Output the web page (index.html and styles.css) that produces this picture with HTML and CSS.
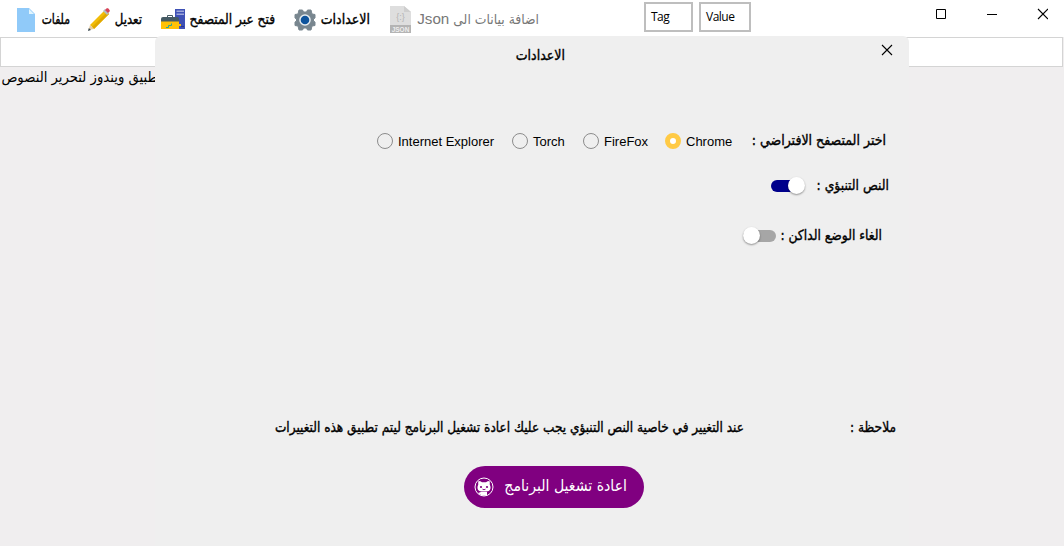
FILE: index.html
```html
<!DOCTYPE html>
<html lang="ar">
<head>
<meta charset="utf-8">
<title>الاعدادات</title>
<link rel="stylesheet" href="styles.css">
</head>
<body>
<header class="toolbar">
  <div class="tool tool-files">
    <svg width="18" height="24" viewBox="0 0 18 24"><path fill="#90caf9" d="M0 0h12l6 6v18H0z"/><path fill="#e1f5fe" d="M12 1v5h5z"/></svg>
    <span class="ar w-files" dir="rtl">ملفات</span>
  </div>
  <div class="tool tool-edit">
    <svg width="23" height="24" viewBox="0 0 23 24"><path fill="#f1bc08" d="M2 17 17 2l4 4L6 21z"/><path fill="#e0a800" d="m4 19 15-15 2 2L6 21z"/><path fill="#b0bec5" d="m15 3 2-2 4 4-2 2z"/><path fill="#d84358" d="m17 2 2-2q2 0 3 3l-2 2z"/><path fill="#e8cda0" d="m2 17-1.500 5L6 21z"/><path fill="#37474f" d="M.8 20 0 23l3-1z"/></svg>
    <span class="ar w-edit" dir="rtl">تعديل</span>
  </div>
  <div class="tool tool-open">
    <svg width="25" height="21" viewBox="0 0 25 21"><path fill="#3f51b5" d="M14 0h10v20H14z"/><path fill="#9fa8da" d="M15.500 1.500h7.500V3h-7.500zm0 3h7.500V6h-7.500z"/><path fill="#283593" d="M20 17h3v1h-3z"/><path fill="#455a64" d="M0 10q0-2 2-2h4V7q0-1 1-1h4q1 0 1 1v1h4q2 0 2 2v3H0zm7-2h4V7H7z"/><path fill="#ffc107" d="M0 12.500h18V20H0zm18 2.500h2v2h-2z"/><path fill="none" stroke="#26a69a" d="M5 18.500h2.500v-2h3v-2"/></svg>
    <span class="ar w-open" dir="rtl">فتح عبر المتصفح</span>
  </div>
  <div class="tool tool-settings">
    <svg width="22" height="22" viewBox="0 0 22 22"><path fill="#78868f" stroke="#78868f" stroke-linejoin="round" d="M5 1h3.500l1 2h3l1-2H17l1 4 3 .5V9l-1.500 1v2l1.500 1v3.500l-3 .5-1 4h-3.500l-1-2h-3l-1 2H5l-1-4-3-.5V13l1.500-1v-2L1 9V5.500L4 5z"/><circle cx="11" cy="11" r="5.800" fill="#e6edf1"/><circle cx="11" cy="11" r="4.300" fill="#0d539c"/></svg>
    <span class="ar w-settings" dir="rtl">الاعدادات</span>
  </div>
  <div class="tool tool-json">
    <svg width="21" height="27" viewBox="0 0 21 27"><path fill="#dedede" d="M0 0h14l7 6v21H0z"/><path fill="#cecece" d="M14 0v6h7z"/><path fill="#b4b4b4" d="M0 19h21v8H0z"/><text class="glyph-braces" x="10.500" y="13.500">{:}</text><text class="glyph-json" x="10.500" y="25.500">JSON</text></svg>
    <span class="ar w-json" dir="rtl">اضافة بيانات الى <span class="latin">Json</span></span>
  </div>
  <div class="chip chip-tag">Tag</div>
  <div class="chip chip-value">Value</div>
  <svg class="window-controls" width="113" height="12" viewBox="0 0 113 12"><path fill="none" stroke="#000" d="M1.500 1.500h9v9h-9zM52 6.500h10"/><path fill="none" stroke="#000" stroke-width="1.100" d="m103 1 10 10m0-10-10 10"/></svg>
</header>
<div class="search-field"></div>
<p class="document-text" dir="rtl">تطبيق ويندوز لتحرير النصوص</p>

<section class="panel">
  <div class="panel-head">
    <span class="ar w-title" dir="rtl">الاعدادات</span>
    <svg class="panel-close" width="12" height="12" viewBox="0 0 12 12"><path fill="none" stroke="#000" stroke-width="1.100" d="m1 1 10 10m0-10L1 11"/></svg>
  </div>
  <div class="row row-browser">
    <div class="option opt-ie"><i class="radio"></i>Internet Explorer</div>
    <div class="option opt-torch"><i class="radio"></i>Torch</div>
    <div class="option opt-firefox"><i class="radio"></i>FireFox</div>
    <div class="option opt-chrome"><i class="radio radio-on"></i>Chrome</div>
    <span class="ar w-browser" dir="rtl">اختر المتصفح الافتراضي :</span>
  </div>
  <div class="row row-predict">
    <i class="switch switch-on"></i>
    <span class="ar w-predict" dir="rtl">النص التنبؤي :</span>
  </div>
  <div class="row row-dark">
    <i class="switch"></i>
    <span class="ar w-dark" dir="rtl">الغاء الوضع الداكن :</span>
  </div>
  <div class="row row-note">
    <span class="ar w-note" dir="rtl">عند التغيير في خاصية النص التنبؤي يجب عليك اعادة تشغيل البرنامج ليتم تطبيق هذه التغييرات</span>
    <span class="ar w-note-label" dir="rtl">ملاحظة :</span>
  </div>
  <div class="restart">
    <svg width="20" height="20" viewBox="0 0 20 20"><circle cx="10" cy="10" r="9" fill="none" stroke="#fff" stroke-width="1"/><path fill="#fff" d="M4.500 4Q6.500 4 8 5.200h4Q13.500 4 15.500 4q.6 1.800.2 3.300 2 5-1 6.700Q10 15 5.300 14q-3-1.700-1-6.700-.4-1.500.2-3.300zM7 15h6v3q-3 1-6 0l-3-2z"/><circle cx="7" cy="10" r="1.100" fill="#800080"/><circle cx="13" cy="10" r="1.100" fill="#800080"/><path fill="none" stroke="#800080" stroke-width=".9" d="M8.500 12.200q1.500 1 3 0"/></svg>
    <span class="ar w-restart" dir="rtl">اعادة تشغيل البرنامج</span>
  </div>
</section>
</body>
</html>
```
FILE: styles.css
```css
* { box-sizing: border-box; }
body {
  margin: 0;
  width: 1064px;
  height: 546px;
  overflow: hidden;
  position: relative;
  background: #f0eeef;
  color: #000;
  font: 13px "Liberation Sans", sans-serif;
}
svg { display: block; flex: none; }

.toolbar { height: 37px; background: #fff; display: flex; align-items: flex-start; padding-left: 17px; }
.tool { display: flex; height: 37px; align-items: center; }
.tool svg { margin-top: 2px; }
.tool .ar { margin-top: 0; }
.ar {
  display: block;
  flex: none;
  white-space: nowrap;
  line-height: 20px;
  font-family: "DejaVu Sans Condensed", "DejaVu Sans", sans-serif;
  font-size: 14px;
  transform-origin: right center;
  -webkit-text-stroke: .35px currentColor;
}
.tool-files { gap: 7px; width: 71px; }
.tool-edit { gap: 3px; width: 73px; }
.tool-open { gap: 3px; width: 133px; }
.tool-settings { gap: 5px; width: 96px; }
.tool-json { gap: 6px; width: 254px; color: #777; }
.w-files { width: 28px; transform: scaleX(.86); }
.w-edit { width: 28px; transform: scaleX(.93); }
.w-open { width: 86px; transform: scaleX(.97); }
.w-settings, .w-title { width: 49px; }
.w-title { margin-top: 1px; }
.w-json { width: 122px; }
.tool-json .ar { font-size: 13.8px; -webkit-text-stroke: 0; }
.latin { font: 15.2px "Liberation Sans", sans-serif; }
.glyph-braces { font: 9px "Liberation Sans", sans-serif; fill: #b4b4b4; text-anchor: middle; }
.glyph-json { font: bold 6.5px "Liberation Sans", sans-serif; fill: #eee; text-anchor: middle; }

.chip { height: 30px; margin-top: 2px; border: 2px solid #bebebe; padding: 0 5px; font: 12px/26px "Open Sans", "Noto Sans", sans-serif; letter-spacing: -.5px; }
.chip-tag { width: 49px; margin-right: 6px; }
.chip-value { width: 52px; }
.window-controls { margin: 8px 0 0 184px; }

.search-field { width: 1063px; height: 30px; background: #fff; border: 1px solid #d4d4d4; }
.document-text { margin: 0; width: 162px; white-space: nowrap; font: 14.7px/19px "DejaVu Sans Condensed", "DejaVu Sans", sans-serif; }

.panel { position: absolute; left: 155px; top: 36px; width: 754px; height: 510px; background: #efefef; border-radius: 6px 6px 0 0; }
.panel-head { height: 36px; display: flex; align-items: center; padding-left: 361px; }
.panel-close { margin: -8px 0 0 316px; }

.row { display: flex; align-items: center; }
.row .ar { margin-top: -2px; }
.row-browser { height: 30px; margin-top: 54px; padding-left: 222px; }
.option { display: flex; align-items: center; gap: 5px; height: 18px; white-space: nowrap; }
.radio { flex: none; width: 16px; height: 16px; border: 1px solid #8c8c8c; border-radius: 50%; }
.radio-on { border: 5px solid #ffca45; background: #fff; }
.opt-ie { width: 135px; }
.opt-torch { width: 71px; }
.opt-firefox { width: 82px; }
.opt-chrome { width: 87px; }
.w-browser { width: 134px; }
.row-predict { height: 20px; margin-top: 20px; padding-left: 616px; }
.w-predict { width: 74px; margin-left: 11px; transform: scaleX(.98); }
.row-dark { height: 20px; margin-top: 30px; padding-left: 588px; }
.w-dark { width: 103px; margin-left: 3px; transform: scaleX(.98); }
.row-note { height: 20px; margin-top: 172px; padding-left: 120px; }
.w-note { width: 469px; transform: scaleX(.963); }
.w-note-label { width: 48px; margin-left: 104px; transform: scaleX(.97); }

.switch { position: relative; flex: none; width: 33px; height: 12px; border-radius: 6px; background: #a6a6a6; }
.switch::after { content: ""; position: absolute; left: 0; top: -3px; width: 17px; height: 17px; border-radius: 50%; background: #fff; box-shadow: 0 1px 2px #0006; }
.switch-on { background: #00008b; }
.switch-on::after { left: 17px; }

.restart { width: 180px; height: 42px; margin: 28px 0 0 309px; border-radius: 21px; background: #800080; color: #fff; display: flex; align-items: center; padding-left: 10px; gap: 10px; }
.restart .ar { width: 123px; margin-top: -3px; font-size: 15.7px; -webkit-text-stroke: 0; }
```
